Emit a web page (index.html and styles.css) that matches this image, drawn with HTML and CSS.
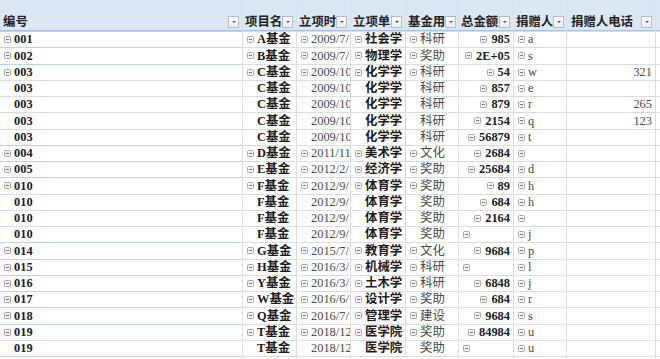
FILE: index.html
```html
<!DOCTYPE html>
<html lang="zh">
<head>
<meta charset="utf-8">
<title>Pivot</title>
<link rel="stylesheet" href="styles.css">
</head>
<body>
<div class="sheet">
  <div class="row head">
    <div class="h">编号<span class="dd"></span></div>
    <div class="h">项目名<span class="dd"></span></div>
    <div class="h">立项时<span class="dd"></span></div>
    <div class="h">立项单<span class="dd"></span></div>
    <div class="h">基金用<span class="dd"></span></div>
    <div class="h">总金额<span class="dd"></span></div>
    <div class="h">捐赠人<span class="dd"></span></div>
    <div class="h wide">捐赠人电话<span class="dd"></span></div>
    <div class="h"></div>
  </div>

  <div class="row grp">
    <div class="c b"><i class="tg"></i>001</div>
    <div class="c b"><i class="tg"></i>A基金</div>
    <div class="c r"><i class="tg"></i>2009/7/</div>
    <div class="c b"><i class="tg"></i>社会学</div>
    <div class="c r"><i class="tg"></i>科研</div>
    <div class="c b num"><i class="tg"></i>985</div>
    <div class="c r"><i class="tg"></i>a</div>
    <div class="c r num"></div>
    <div class="c"></div>
  </div>
  <div class="row grp">
    <div class="c b"><i class="tg"></i>002</div>
    <div class="c b"><i class="tg"></i>B基金</div>
    <div class="c r"><i class="tg"></i>2009/7/</div>
    <div class="c b"><i class="tg"></i>物理学</div>
    <div class="c r"><i class="tg"></i>奖助</div>
    <div class="c b num"><i class="tg"></i>2E+05</div>
    <div class="c r"><i class="tg"></i>s</div>
    <div class="c r num"></div>
    <div class="c"></div>
  </div>
  <div class="row grp">
    <div class="c b"><i class="tg"></i>003</div>
    <div class="c b"><i class="tg"></i>C基金</div>
    <div class="c r"><i class="tg"></i>2009/10</div>
    <div class="c b"><i class="tg"></i>化学学</div>
    <div class="c r"><i class="tg"></i>科研</div>
    <div class="c b num"><i class="tg"></i>54</div>
    <div class="c r"><i class="tg"></i>w</div>
    <div class="c r num">321</div>
    <div class="c"></div>
  </div>
  <div class="row">
    <div class="c b"><i class="tg off"></i>003</div>
    <div class="c b"><i class="tg off"></i>C基金</div>
    <div class="c r"><i class="tg off"></i>2009/10</div>
    <div class="c b"><i class="tg off"></i>化学学</div>
    <div class="c r"><i class="tg off"></i>科研</div>
    <div class="c b num"><i class="tg"></i>857</div>
    <div class="c r"><i class="tg"></i>e</div>
    <div class="c r num"></div>
    <div class="c"></div>
  </div>
  <div class="row">
    <div class="c b"><i class="tg off"></i>003</div>
    <div class="c b"><i class="tg off"></i>C基金</div>
    <div class="c r"><i class="tg off"></i>2009/10</div>
    <div class="c b"><i class="tg off"></i>化学学</div>
    <div class="c r"><i class="tg off"></i>科研</div>
    <div class="c b num"><i class="tg"></i>879</div>
    <div class="c r"><i class="tg"></i>r</div>
    <div class="c r num">265</div>
    <div class="c"></div>
  </div>
  <div class="row">
    <div class="c b"><i class="tg off"></i>003</div>
    <div class="c b"><i class="tg off"></i>C基金</div>
    <div class="c r"><i class="tg off"></i>2009/10</div>
    <div class="c b"><i class="tg off"></i>化学学</div>
    <div class="c r"><i class="tg off"></i>科研</div>
    <div class="c b num"><i class="tg"></i>2154</div>
    <div class="c r"><i class="tg"></i>q</div>
    <div class="c r num">123</div>
    <div class="c"></div>
  </div>
  <div class="row">
    <div class="c b"><i class="tg off"></i>003</div>
    <div class="c b"><i class="tg off"></i>C基金</div>
    <div class="c r"><i class="tg off"></i>2009/10</div>
    <div class="c b"><i class="tg off"></i>化学学</div>
    <div class="c r"><i class="tg off"></i>科研</div>
    <div class="c b num"><i class="tg"></i>56879</div>
    <div class="c r"><i class="tg"></i>t</div>
    <div class="c r num"></div>
    <div class="c"></div>
  </div>
  <div class="row grp">
    <div class="c b"><i class="tg"></i>004</div>
    <div class="c b"><i class="tg"></i>D基金</div>
    <div class="c r"><i class="tg"></i>2011/11</div>
    <div class="c b"><i class="tg"></i>美术学</div>
    <div class="c r"><i class="tg"></i>文化</div>
    <div class="c b num"><i class="tg"></i>2684</div>
    <div class="c r"><i class="tg"></i></div>
    <div class="c r num"></div>
    <div class="c"></div>
  </div>
  <div class="row grp">
    <div class="c b"><i class="tg"></i>005</div>
    <div class="c b"><i class="tg"></i>E基金</div>
    <div class="c r"><i class="tg"></i>2012/2/</div>
    <div class="c b"><i class="tg"></i>经济学</div>
    <div class="c r"><i class="tg"></i>奖助</div>
    <div class="c b num"><i class="tg"></i>25684</div>
    <div class="c r"><i class="tg"></i>d</div>
    <div class="c r num"></div>
    <div class="c"></div>
  </div>
  <div class="row grp">
    <div class="c b"><i class="tg"></i>010</div>
    <div class="c b"><i class="tg"></i>F基金</div>
    <div class="c r"><i class="tg"></i>2012/9/</div>
    <div class="c b"><i class="tg"></i>体育学</div>
    <div class="c r"><i class="tg"></i>奖助</div>
    <div class="c b num"><i class="tg"></i>89</div>
    <div class="c r"><i class="tg"></i>h</div>
    <div class="c r num"></div>
    <div class="c"></div>
  </div>
  <div class="row">
    <div class="c b"><i class="tg off"></i>010</div>
    <div class="c b"><i class="tg off"></i>F基金</div>
    <div class="c r"><i class="tg off"></i>2012/9/</div>
    <div class="c b"><i class="tg off"></i>体育学</div>
    <div class="c r"><i class="tg off"></i>奖助</div>
    <div class="c b num"><i class="tg"></i>684</div>
    <div class="c r"><i class="tg"></i>h</div>
    <div class="c r num"></div>
    <div class="c"></div>
  </div>
  <div class="row">
    <div class="c b"><i class="tg off"></i>010</div>
    <div class="c b"><i class="tg off"></i>F基金</div>
    <div class="c r"><i class="tg off"></i>2012/9/</div>
    <div class="c b"><i class="tg off"></i>体育学</div>
    <div class="c r"><i class="tg off"></i>奖助</div>
    <div class="c b num"><i class="tg"></i>2164</div>
    <div class="c r"><i class="tg"></i></div>
    <div class="c r num"></div>
    <div class="c"></div>
  </div>
  <div class="row">
    <div class="c b"><i class="tg off"></i>010</div>
    <div class="c b"><i class="tg off"></i>F基金</div>
    <div class="c r"><i class="tg off"></i>2012/9/</div>
    <div class="c b"><i class="tg off"></i>体育学</div>
    <div class="c r"><i class="tg off"></i>奖助</div>
    <div class="c b"><i class="tg"></i></div>
    <div class="c r"><i class="tg"></i>j</div>
    <div class="c r num"></div>
    <div class="c"></div>
  </div>
  <div class="row grp">
    <div class="c b"><i class="tg"></i>014</div>
    <div class="c b"><i class="tg"></i>G基金</div>
    <div class="c r"><i class="tg"></i>2015/7/</div>
    <div class="c b"><i class="tg"></i>教育学</div>
    <div class="c r"><i class="tg"></i>文化</div>
    <div class="c b num"><i class="tg"></i>9684</div>
    <div class="c r"><i class="tg"></i>p</div>
    <div class="c r num"></div>
    <div class="c"></div>
  </div>
  <div class="row grp">
    <div class="c b"><i class="tg"></i>015</div>
    <div class="c b"><i class="tg"></i>H基金</div>
    <div class="c r"><i class="tg"></i>2016/3/</div>
    <div class="c b"><i class="tg"></i>机械学</div>
    <div class="c r"><i class="tg"></i>科研</div>
    <div class="c b"><i class="tg"></i></div>
    <div class="c r"><i class="tg"></i>l</div>
    <div class="c r num"></div>
    <div class="c"></div>
  </div>
  <div class="row grp">
    <div class="c b"><i class="tg"></i>016</div>
    <div class="c b"><i class="tg"></i>Y基金</div>
    <div class="c r"><i class="tg"></i>2016/3/</div>
    <div class="c b"><i class="tg"></i>土木学</div>
    <div class="c r"><i class="tg"></i>科研</div>
    <div class="c b num"><i class="tg"></i>6848</div>
    <div class="c r"><i class="tg"></i>j</div>
    <div class="c r num"></div>
    <div class="c"></div>
  </div>
  <div class="row grp">
    <div class="c b"><i class="tg"></i>017</div>
    <div class="c b"><i class="tg"></i>W基金</div>
    <div class="c r"><i class="tg"></i>2016/6/</div>
    <div class="c b"><i class="tg"></i>设计学</div>
    <div class="c r"><i class="tg"></i>奖助</div>
    <div class="c b num"><i class="tg"></i>684</div>
    <div class="c r"><i class="tg"></i>r</div>
    <div class="c r num"></div>
    <div class="c"></div>
  </div>
  <div class="row grp">
    <div class="c b"><i class="tg"></i>018</div>
    <div class="c b"><i class="tg"></i>Q基金</div>
    <div class="c r"><i class="tg"></i>2016/7/</div>
    <div class="c b"><i class="tg"></i>管理学</div>
    <div class="c r"><i class="tg"></i>建设</div>
    <div class="c b num"><i class="tg"></i>9684</div>
    <div class="c r"><i class="tg"></i>s</div>
    <div class="c r num"></div>
    <div class="c"></div>
  </div>
  <div class="row grp">
    <div class="c b"><i class="tg"></i>019</div>
    <div class="c b"><i class="tg"></i>T基金</div>
    <div class="c r"><i class="tg"></i>2018/12</div>
    <div class="c b"><i class="tg"></i>医学院</div>
    <div class="c r"><i class="tg"></i>奖助</div>
    <div class="c b num"><i class="tg"></i>84984</div>
    <div class="c r"><i class="tg"></i>u</div>
    <div class="c r num"></div>
    <div class="c"></div>
  </div>
  <div class="row">
    <div class="c b"><i class="tg off"></i>019</div>
    <div class="c b"><i class="tg off"></i>T基金</div>
    <div class="c r"><i class="tg off"></i>2018/12</div>
    <div class="c b"><i class="tg off"></i>医学院</div>
    <div class="c r"><i class="tg off"></i>奖助</div>
    <div class="c b"><i class="tg"></i></div>
    <div class="c r"><i class="tg"></i>u</div>
    <div class="c r num"></div>
    <div class="c"></div>
  </div>
  <div class="row grp tail">
    <div class="c"></div><div class="c"></div><div class="c"></div><div class="c"></div><div class="c"></div><div class="c"></div><div class="c"></div><div class="c"></div><div class="c"></div>
  </div>
</div>
</body>
</html>
```

FILE: styles.css
```css
html, body {
  margin: 0;
  padding: 0;
  background: #ffffff;
}

.sheet {
  width: 660px;
  height: 359px;
  overflow: hidden;
  font-family: "Liberation Serif", "Noto Sans CJK SC", serif;
  font-size: 12.4px;
  line-height: 1;
  color: #1c1c1c;
}

.row {
  display: grid;
  grid-template-columns: 242px 54px 54px 55px 53px 55px 53px 89px 1fr;
  height: 16.25px;
}

.row.head {
  height: 31px;
  background: #dde7f2;
}

.h {
  display: flex;
  align-items: center;
  box-sizing: border-box;
  padding: 14px 0 0 2px;
  border-bottom: 1px solid #a9c2e0;
  border-left: 1px solid #d8e2ee;
  font-weight: bold;
  color: #222;
  white-space: nowrap;
  overflow: hidden;
}

.h:first-child {
  border-left: none;
  padding-left: 3px;
}

.h.wide {
  padding-left: 4px;
}

.dd {
  flex: none;
  position: relative;
  margin-left: auto;
  margin-right: 3px;
  width: 11px;
  height: 12px;
  box-sizing: border-box;
  border: 1px solid #b3bcc8;
  background: linear-gradient(#ffffff, #e9edf2);
}

.dd::after {
  content: "";
  position: absolute;
  left: 3px;
  top: 4px;
  border-left: 2px solid transparent;
  border-right: 2px solid transparent;
  border-top: 2px solid #555;
}

.c {
  display: flex;
  align-items: center;
  box-sizing: border-box;
  padding-left: 4px;
  border-top: 1px solid #dcdcdc;
  border-left: 1px solid #dcdcdc;
  white-space: nowrap;
  overflow: hidden;
}

.c:first-child {
  border-left: none;
}

.row.grp .c:first-child {
  border-top-color: #bed2ea;
}

.row.tail .c {
  border-left-color: #e6e6e6;
}

.b {
  font-weight: bold;
  color: #1c1c1c;
}

.r {
  font-weight: normal;
  color: #4a4a4a;
}

.num {
  justify-content: flex-end;
  padding-right: 3px;
}

.tg {
  flex: none;
  position: relative;
  display: inline-block;
  width: 7px;
  height: 7px;
  box-sizing: border-box;
  margin-right: 3px;
  border: 1px solid #a5a5a5;
  border-radius: 1.5px;
  background: #f3f3f3;
}

.tg::after {
  content: "";
  position: absolute;
  left: 1px;
  right: 1px;
  top: 2px;
  height: 1px;
  background: #7a7a7a;
}

.num .tg {
  margin-right: 4px;
}

.tg.off {
  visibility: hidden;
}
```
